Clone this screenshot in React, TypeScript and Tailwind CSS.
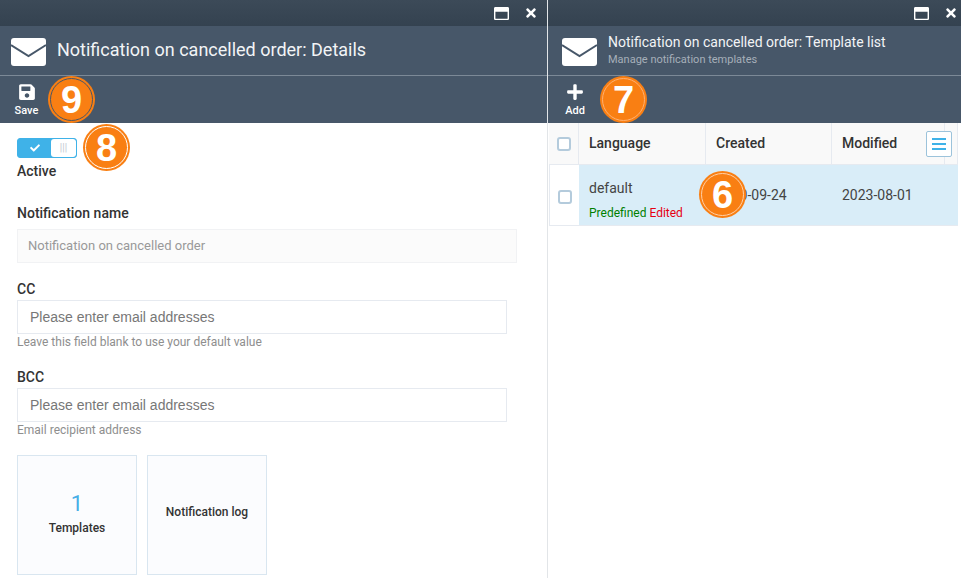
import { FaCheck, FaPlus, FaRegWindowMaximize, FaSave, FaTimes } from 'react-icons/fa';

function Badge({ n, className, ring }: { n: string; className: string; ring: string }) {
  return (
    <div className={`absolute z-10 flex h-[47px] w-[47px] items-center justify-center rounded-full bg-[#f97f13] ${className}`}>
      <div className={`absolute inset-[2px] rounded-full border ${ring}`} />
      <span className="font-['Liberation_Sans',sans-serif] text-[38px] font-bold leading-none text-white">{n}</span>
    </div>
  );
}

function EnvelopeIcon() {
  return (
    <svg width="36" height="28" viewBox="0 0 36 28" className="mt-[3px] shrink-0">
      <rect width="35" height="28" rx="3" fill="white" />
      <path d="M0 7l17.5 11L35 7" fill="none" stroke="#475769" strokeWidth="2" />
    </svg>
  );
}

function WindowButtons({ className }: { className: string }) {
  return (
    <div className={`flex h-[26px] shrink-0 items-center justify-end gap-[15px] bg-gradient-to-b from-[#3c4a58] to-[#344250] ${className}`}>
      <FaRegWindowMaximize size={15} className="text-white" />
      <FaTimes size={14} className="text-white" />
    </div>
  );
}

function Field({ label, hint }: { label: string; hint: string }) {
  return (
    <div className="mb-[18px]">
      <div className="mb-px text-sm leading-[20px] font-medium text-[#333]">{label}</div>
      <div className="flex h-[34px] w-[490px] items-center border border-[#e6eaf0] px-3 font-['Liberation_Sans',sans-serif] text-sm text-[#777]">
        Please enter email addresses
      </div>
      <div className="mt-px text-xs leading-[14px] text-[#8e8e8e]">{hint}</div>
    </div>
  );
}

function Checkbox({ className = '' }: { className?: string }) {
  return <div className={`h-[14px] w-[14px] rounded-[3px] border-2 border-[#b4cbdc] bg-white ${className}`} />;
}

function DetailsPane() {
  return (
    <div className="relative flex w-[547px] shrink-0 flex-col">
      <WindowButtons className="pr-[9px]" />
      <div className="flex h-[50px] shrink-0 items-center gap-[10px] border-b border-[#7c8997] bg-[#475769] pl-[11px]">
        <EnvelopeIcon />
        <h1 className="pb-[2px] text-lg font-normal text-[#f2f4f6]">Notification on cancelled order: Details</h1>
      </div>
      <div className="h-[47px] shrink-0 bg-[#475769] pl-[14px] pt-[7px]">
        <div className="flex w-[25px] flex-col items-center text-white">
          <FaSave size={18} />
          <span className="mt-[3px] text-[11px] leading-[14px] font-medium">Save</span>
        </div>
      </div>
      <div className="pl-[17px] pt-[15px]">
        <div className="flex h-[20px] w-[60px] overflow-hidden rounded-[3px] border border-[#3fb2e8] bg-[#3fb2e8]">
          <div className="flex w-[33px] items-center justify-center">
            <FaCheck size={10} className="text-white" />
          </div>
          <div className="flex flex-1 items-center justify-center rounded-[3px] bg-white text-[10px] leading-none text-[#c4c8d0]">|||</div>
        </div>
        <div className="mt-[3px] text-sm leading-[20px] font-medium text-[#333]">Active</div>
        <div className="mt-[22px] text-sm leading-[20px] font-medium text-[#333]">Notification name</div>
        <div className="mb-[16px] mt-[6px] flex h-[34px] w-[500px] items-center border border-[#f1f2f4] bg-[#fbfbfb] px-[10px] text-[13px] text-[#999]">
          Notification on cancelled order
        </div>
        <Field label="CC" hint="Leave this field blank to use your default value" />
        <Field label="BCC" hint="Email recipient address" />
        <div className="mt-[15px] flex gap-[10px]">
          <div className="flex h-[120px] w-[120px] flex-col items-center justify-center border border-[#d9e6f0] bg-[#fbfcfe] pb-[5px]">
            <span className="text-[22px] leading-[30px] text-[#45aee6]">1</span>
            <span className="mt-px text-xs font-medium text-[#333]">Templates</span>
          </div>
          <div className="flex h-[120px] w-[120px] items-center justify-center border border-[#d9e6f0] bg-[#fbfcfe] pb-[6px]">
            <span className="text-xs font-medium text-[#333]">Notification log</span>
          </div>
        </div>
      </div>
      <Badge n="9" className="left-[48px] top-[76px]" ring="border-[#4a5665]" />
      <Badge n="8" className="left-[83px] top-[124px]" ring="border-white" />
    </div>
  );
}

function TemplatePane() {
  return (
    <div className="relative flex flex-1 flex-col border-l border-[#e2e5e8]">
      <WindowButtons className="pr-[3px]" />
      <div className="flex h-[50px] shrink-0 items-center gap-[10px] border-b border-[#7c8997] bg-[#475769] pl-[14px]">
        <EnvelopeIcon />
        <div>
          <h2 className="text-sm leading-[18px] font-normal text-[#f2f4f6]">Notification on cancelled order: Template list</h2>
          <div className="mt-px text-[11px] leading-[16px] text-[#a6afb9]">Manage notification templates</div>
        </div>
      </div>
      <div className="h-[47px] shrink-0 bg-[#475769] pl-[17px] pt-[7px]">
        <div className="flex w-[20px] flex-col items-center text-white">
          <FaPlus size={18} />
          <span className="mt-[3px] text-[11px] leading-[14px] font-medium">Add</span>
        </div>
      </div>
      <div className="w-[410px] pl-px">
        <div className="flex h-[42px] shrink-0 border-b border-[#e6eaf0] bg-[#f9f9f9] text-sm font-medium text-[#333]">
          <div className="flex w-[30px] items-center justify-center border-r border-[#e6eaf0]"><Checkbox /></div>
          <div className="flex w-[127px] items-center border-r border-[#e6eaf0] pb-[2px] pl-[10px]">Language</div>
          <div className="flex w-[126px] items-center border-r border-[#e6eaf0] pb-[2px] pl-[10px]">Created</div>
          <div className="relative flex w-[113px] items-center border-r border-[#e6eaf0] pb-[2px] pl-[10px]">
            Modified
            <div className="absolute right-[-8px] top-[8px] z-[1] flex h-[26px] w-[26px] flex-col items-center justify-center gap-[3px] rounded-[2px] border border-[#9cc3db] bg-white">
              <span className="h-[2px] w-[14px] bg-[#3fb2e8]" />
              <span className="h-[2px] w-[14px] bg-[#3fb2e8]" />
              <span className="h-[2px] w-[14px] bg-[#3fb2e8]" />
            </div>
          </div>
          <div className="flex-1 border-r border-[#e6eaf0]" />
        </div>
        <div className="flex h-[61px] border-b border-[#e6eaf0]">
          <div className="flex w-[30px] items-center justify-center border-l border-[#e6eaf0]"><Checkbox className="mt-[3px]" /></div>
          <div className="flex flex-1 items-center bg-[#d9edf8] text-sm text-[#444]">
            <div className="w-[127px] pl-[10px] pt-[8px]">
              <div className="leading-[20px]">default</div>
              <div className="mt-[8px] text-xs leading-[14px]">
                <span className="text-[#008000]">Predefined</span> <span className="text-[#e60012]">Edited</span>
              </div>
            </div>
            <div className="w-[126px] pl-[10px]">2020-09-24</div>
            <div className="pl-[10px]">2023-08-01</div>
          </div>
        </div>
      </div>
      <Badge n="7" className="left-[52px] top-[76px]" ring="border-[#ffb070]" />
      <Badge n="6" className="left-[151px] top-[171px]" ring="border-[#ffd0a8]" />
    </div>
  );
}

export default function App() {
  return (
    <div className="flex h-[578px] w-[961px] overflow-hidden bg-white font-['Roboto',sans-serif]">
      <DetailsPane />
      <TemplatePane />
    </div>
  );
}
